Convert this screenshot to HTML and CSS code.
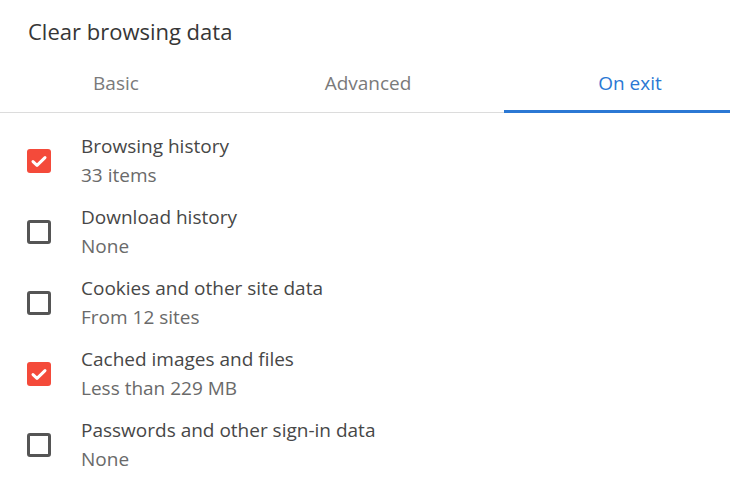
FILE: index.html
```html
<!DOCTYPE html>
<html lang="en">
<head>
<meta charset="utf-8">
<title>Clear browsing data</title>
<link rel="stylesheet" href="styles.css">
</head>
<body>
<div class="dialog">
  <h1 class="title">Clear browsing data</h1>
  <div class="tabs">
    <div class="tab tab-basic">Basic</div>
    <div class="tab tab-advanced">Advanced</div>
    <div class="tab tab-exit active">On exit</div>
  </div>
  <ul class="list">
    <li class="row">
      <span class="box checked"><svg viewBox="0 0 24 24" width="24" height="24"><path d="M6 12.6 L10 16.3 L18 8.6" fill="none" stroke="#fff" stroke-width="3" stroke-linecap="round" stroke-linejoin="round"/></svg></span>
      <div class="text"><div class="label">Browsing history</div><div class="sub">33 items</div></div>
    </li>
    <li class="row">
      <span class="box"></span>
      <div class="text"><div class="label">Download history</div><div class="sub">None</div></div>
    </li>
    <li class="row">
      <span class="box"></span>
      <div class="text"><div class="label">Cookies and other site data</div><div class="sub">From 12 sites</div></div>
    </li>
    <li class="row">
      <span class="box checked"><svg viewBox="0 0 24 24" width="24" height="24"><path d="M6 12.6 L10 16.3 L18 8.6" fill="none" stroke="#fff" stroke-width="3" stroke-linecap="round" stroke-linejoin="round"/></svg></span>
      <div class="text"><div class="label">Cached images and files</div><div class="sub">Less than 229 MB</div></div>
    </li>
    <li class="row">
      <span class="box"></span>
      <div class="text"><div class="label">Passwords and other sign-in data</div><div class="sub">None</div></div>
    </li>
  </ul>
</div>
</body>
</html>
```
FILE: styles.css
```css
html, body {
  margin: 0;
  padding: 0;
  background: #fff;
}
body {
  font-family: "Open Sans", Lato, sans-serif;
  width: 730px;
  height: 489px;
  overflow: hidden;
}
.dialog {
  width: 730px;
}
.title {
  margin: 0;
  padding: 17px 0 0 28px;
  font-size: 22px;
  line-height: 28px;
  font-weight: 400;
  color: #363636;
}
.tabs {
  display: grid;
  grid-template-columns: 232px 272px 252px;
  overflow: hidden;
  box-shadow: inset 0 -1px 0 #dcdcdc;
}
.tab {
  padding: 26px 0 15px;
  line-height: 24px;
  font-size: 19px;
  text-align: center;
  color: #7a7a7a;
  border-bottom: 3px solid transparent;
}
.tab.active {
  color: #2b78d4;
  border-bottom-color: #2b78d4;
}
.list {
  list-style: none;
  margin: 0;
  padding: 12px 0 0;
}
.row {
  height: 71px;
  display: flex;
  align-items: center;
  padding-left: 27px;
}
.box {
  width: 24px;
  height: 24px;
  box-sizing: border-box;
  border: 3px solid #555;
  border-radius: 3px;
  flex: none;
  margin-right: 30px;
}
.box.checked {
  border: none;
  background: #f44a3a;
}
.box svg {
  display: block;
}
.text {
  font-size: 19px;
  line-height: 29px;
}
.label {
  color: #474747;
}
.sub {
  color: #6a6a6a;
}
```
